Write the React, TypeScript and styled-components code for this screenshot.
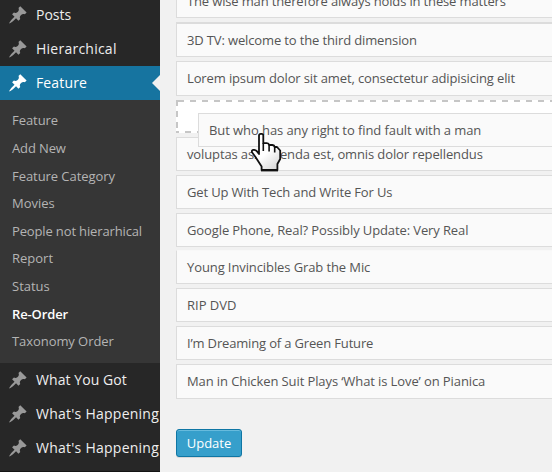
import React from "react";
import styled, { createGlobalStyle } from "styled-components";

const Global = createGlobalStyle`
  * { box-sizing: border-box; }
  html, body { margin: 0; padding: 0; overflow: hidden; }
  body { background: #f1f1f1; font-family: "Open Sans", sans-serif; font-size: 13px; }
`;

const Page = styled.div`
  display: flex;
  width: 552px;
  height: 472px;
  overflow: hidden;
  background: #f1f1f1;
`;

const Sidebar = styled.nav`
  flex: 0 0 160px;
  height: 472px;
  overflow: hidden;
  background: #272727;
  border-bottom: 1px solid #141414;
`;

const MenuItem = styled.a<{ $active?: boolean; $first?: boolean; $track?: number }>`
  position: relative;
  display: flex;
  align-items: center;
  gap: 8px;
  height: 34px;
  margin-top: ${(p) => (p.$first ? "-2px" : "0")};
  padding-left: 8px;
  color: ${(p) => (p.$active ? "#fff" : "#eee")};
  background: ${(p) => (p.$active ? "#1674a0" : "transparent")};
  font-size: 14px;
  line-height: 18px;
  letter-spacing: ${(p) => p.$track ?? 0}px;
  white-space: nowrap;
`;

const Arrow = styled.span`
  position: absolute;
  right: 0;
  top: 9px;
  border: 8px solid transparent;
  border-left-width: 0;
  border-right-color: #f1f1f1;
`;

const PinIcon = styled.svg<{ $active?: boolean }>`
  flex: none;
  width: 20px;
  height: 20px;
  fill: ${(p) => (p.$active ? "#fff" : "#999")};
`;

const Submenu = styled.div`
  height: 263px;
  padding: 6px 0 0 12px;
  background: #363636;
`;

const SubItem = styled.a<{ $current?: boolean; $h: number; $track: number }>`
  display: block;
  height: ${(p) => p.$h}px;
  line-height: 28px;
  letter-spacing: ${(p) => p.$track}px;
  color: ${(p) => (p.$current ? "#fff" : "#b4b4b4")};
  font-weight: ${(p) => (p.$current ? 600 : 400)};
  white-space: nowrap;
`;

const Content = styled.main`
  flex: 1;
  min-width: 0;
  padding-left: 16px;
`;

const List = styled.div`
  display: flex;
  flex-direction: column;
  width: 400px;
  margin-top: -16px;
`;

const Row = styled.div<{ $h?: number; $gap?: number; $heavy?: boolean; $light?: boolean; $track?: number }>`
  flex: none;
  height: ${(p) => p.$h ?? 34}px;
  margin-bottom: ${(p) => p.$gap ?? 4}px;
  padding-left: 10px;
  border: 1px solid #dcdcdc;
  border-top-width: ${(p) => (p.$heavy ? 2 : 1)}px;
  border-top-color: ${(p) => (p.$light ? "#f8f8f8" : "#dcdcdc")};
  background: #fafafa;
  color: #555;
  line-height: 32px;
  letter-spacing: ${(p) => p.$track ?? -0.12}px;
  white-space: nowrap;
`;

const Placeholder = styled.div`
  position: relative;
  flex: none;
  height: 33px;
  margin-bottom: 4px;
  background:
    repeating-linear-gradient(90deg, #c6c6c6 0 6px, transparent 6px 12px) 2px 0 / 100% 2px no-repeat,
    repeating-linear-gradient(90deg, #c6c6c6 0 6px, transparent 6px 12px) -3px 100% / 110% 2px no-repeat,
    repeating-linear-gradient(180deg, #c6c6c6 0 6px, transparent 6px 11px) 0 0 / 2px 100% no-repeat,
    #fff;
`;

const Dragged = styled(Row)`
  position: absolute;
  left: 22px;
  top: 13px;
  width: 400px;
  margin: 0;
`;

const Hand = styled.svg`
  position: absolute;
  left: 74px;
  top: 32px;
  width: 34px;
  height: 42px;
`;

const Button = styled.button`
  display: block;
  width: 66px;
  height: 28px;
  margin-top: 26px;
  padding: 0;
  border: 1px solid #0f76a4;
  border-radius: 3px;
  background: #369fcb;
  box-shadow: inset 0 1px 0 #67bbdd, 0 1px 0 rgba(0, 0, 0, 0.1);
  color: #fff;
  font: 13px/26px "Open Sans", sans-serif;
`;

const Pin = ({ active }: { active?: boolean }) => (
  <PinIcon viewBox="0 0 20 20" $active={active}>
    <path d="M10.44 3.02l1.82-1.82 6.36 6.35-1.83 1.82c-1.05-.68-2.48-.57-3.41.36l-.75.75c-.92.93-1.04 2.35-.35 3.41l-1.83 1.82-2.41-2.41-2.8 2.79c-.42.42-3.38 2.71-3.8 2.29s1.86-3.39 2.28-3.81l2.79-2.79L4.1 9.36l1.83-1.82c1.05.69 2.48.57 3.4-.36l.75-.75c.93-.92 1.05-2.35.36-3.41z" />
  </PinIcon>
);

const subItems = [
  { label: "Feature", h: 28, track: -0.05 },
  { label: "Add New", h: 28, track: -0.12 },
  { label: "Feature Category", h: 27, track: -0.06 },
  { label: "Movies", h: 28, track: 0 },
  { label: "People not hierarhical", h: 27, track: -0.14 },
  { label: "Report", h: 28, track: 0 },
  { label: "Status", h: 28, track: 0 },
  { label: "Re-Order", h: 27, track: -0.12 },
  { label: "Taxonomy Order", h: 28, track: -0.07 },
];

export default function App() {
  return (
    <Page>
      <Global />
      <Sidebar>
        <MenuItem $first><Pin />Posts</MenuItem>
        <MenuItem $track={0.24}><Pin />Hierarchical</MenuItem>
        <MenuItem $active $track={0.14}><Pin active />Feature<Arrow /></MenuItem>
        <Submenu>
          {subItems.map((s) => (
            <SubItem key={s.label} $h={s.h} $track={s.track} $current={s.label === "Re-Order"}>{s.label}</SubItem>
          ))}
        </Submenu>
        <MenuItem $track={0.08}><Pin />What You Got</MenuItem>
        <MenuItem $track={0.25}><Pin />What's Happening</MenuItem>
        <MenuItem $track={0.25}><Pin />What's Happening</MenuItem>
      </Sidebar>
      <Content>
        <List>
          <Row $track={-0.15}>The wise man therefore always holds in these matters</Row>
          <Row $h={35} $heavy $track={-0.135}>3D TV: welcome to the third dimension</Row>
          <Row $h={35} $track={-0.125}>Lorem ipsum dolor sit amet, consectetur adipisicing elit</Row>
          <Placeholder>
            <Dragged $track={-0.08}>But who has any right to find fault with a man</Dragged>
            <Hand viewBox="0 0 34 42">
              <defs>
                <linearGradient id="palm" x1="0.2" y1="0" x2="0.9" y2="1">
                  <stop offset="0.5" stopColor="#fff" />
                  <stop offset="1" stopColor="#d4d4d4" />
                </linearGradient>
              </defs>
              <path
                d="M9 22V3.5Q9 1.9 10.7 1.9H11.6Q13.3 1.9 13.3 3.5V11.2H16.8Q18.9 11.3 19.1 13H22.4Q24.4 13.2 24.7 15H27L30.2 18.5V27L27.4 32V38H11.6V34.5L5.5 25L2 20.2Q1.4 18 3.6 17.8Q5.6 17.6 7 19.4Z"
                fill="url(#palm)"
                stroke="#111"
                strokeWidth="1.8"
                strokeLinejoin="round"
              />
              <path d="M13.3 11V19M19.1 13V19.5M24.7 15V20.5" fill="none" stroke="#111" strokeWidth="1.6" />
              <path d="M11 38.4H28" stroke="#111" strokeWidth="2" />
            </Hand>
          </Placeholder>
          <Row>voluptas assumenda est, omnis dolor repellendus</Row>
          <Row $track={-0.15}>Get Up With Tech and Write For Us</Row>
          <Row $gap={3} $track={-0.11}>Google Phone, Real? Possibly Update: Very Real</Row>
          <Row $light $track={-0.1}>Young Invincibles Grab the Mic</Row>
          <Row $track={0}>RIP DVD</Row>
          <Row $track={-0.16}>I’m Dreaming of a Green Future</Row>
          <Row $h={35} $track={-0.1}>Man in Chicken Suit Plays ‘What is Love’ on Pianica</Row>
        </List>
        <Button>Update</Button>
      </Content>
    </Page>
  );
}
